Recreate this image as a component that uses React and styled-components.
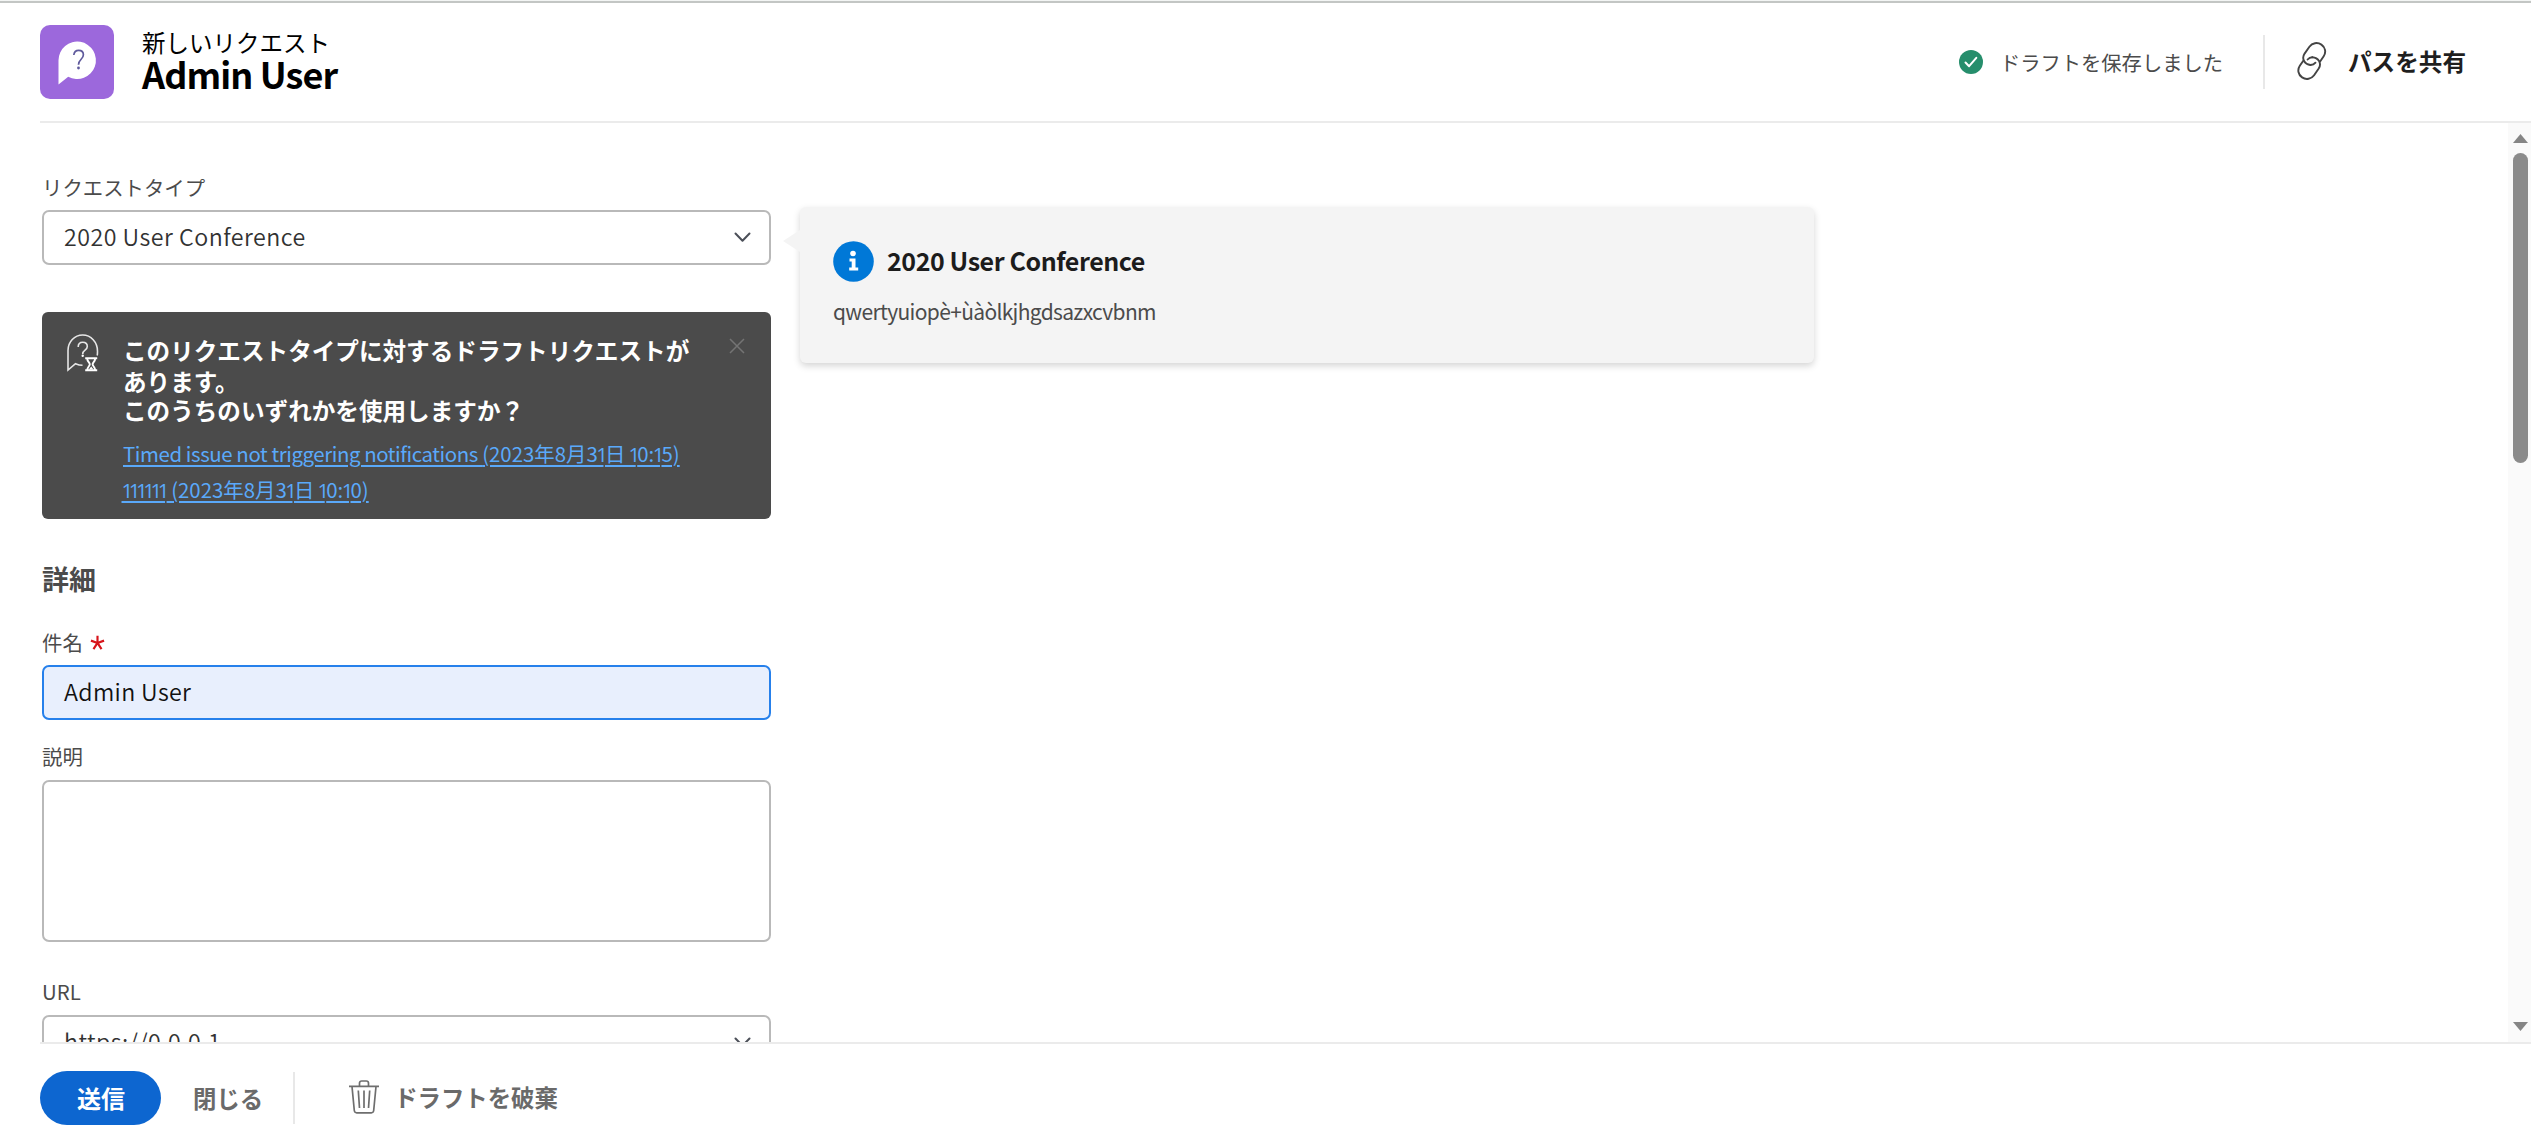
import React from "react";
import styled, { createGlobalStyle } from "styled-components";

const Global = createGlobalStyle`
  *, *::before, *::after { box-sizing: border-box; }
  html, body { margin: 0; padding: 0; background: #fff; overflow: hidden; }
  body { font-family: "Noto Sans CJK JP", "Noto Sans", sans-serif; color: #4b4b4b; }
  button, input, textarea { font: inherit; margin: 0; }
  svg { display: block; flex: none; }
`;

const Page = styled.div`
  width: 2531px;
  height: 1148px;
  display: flex;
  flex-direction: column;
`;

const TopEdge = styled.div`
  height: 3px;
  flex: none;
  border-top: 1px solid #f3f5f4;
  background: #c3c6c4;
`;

const Header = styled.header`
  height: 118px;
  flex: none;
  display: flex;
  align-items: flex-start;
  padding: 22px 65px 0 40px;
`;

const Rule = styled.div`
  height: 2px;
  flex: none;
  margin-left: 40px;
  background: #ebebeb;
`;

const AppIcon = styled.div`
  width: 74px;
  height: 74px;
  border-radius: 10px;
  background: #9c68dc;
  margin-right: 28px;
`;

const Titles = styled.div`
  flex: 1;
  display: flex;
  flex-direction: column;
  color: #000;
`;

const Overline = styled.div`
  font-size: 23.5px;
  line-height: 30px;
  margin-top: 2px;
`;

const Title = styled.h1`
  margin: 0;
  font-size: 36px;
  line-height: 33px;
  font-weight: 700;
  letter-spacing: -0.9px;
`;

const HeaderTools = styled.div`
  display: flex;
  align-items: center;
  height: 54px;
  margin-top: 10px;
`;

const Saved = styled.div`
  display: flex;
  align-items: center;
  gap: 17px;
  font-size: 20.3px;
  line-height: 28px;
  margin-right: 40px;
`;

const Divider = styled.div`
  width: 2px;
  height: ${(p) => p.$height}px;
  background: #e8e8e8;
`;

const ShareButton = styled.button`
  display: flex;
  align-items: center;
  gap: 20px;
  border: 0;
  padding: 0 0 2px;
  margin-left: 32px;
  background: none;
  color: #1f1f1f;
  font-size: 23.6px;
  line-height: 30px;
  font-weight: 700;
`;

const Main = styled.main`
  height: 919px;
  flex: none;
  display: flex;
  overflow: hidden;
`;

const Content = styled.div`
  flex: 1;
  display: flex;
  align-items: flex-start;
  padding: 49px 0 0 42px;
`;

const Form = styled.form`
  width: 729px;
  display: flex;
  flex-direction: column;
`;

const Label = styled.label`
  font-size: 20.4px;
  line-height: 30px;
  height: ${(p) => p.$height || 38}px;
  padding-top: ${(p) => p.$top || 0}px;
`;

const Required = styled.span`
  display: inline-block;
  vertical-align: 1px;
  margin-left: 7px;
`;

const Field = styled.div`
  height: 55px;
  flex: none;
  display: flex;
  align-items: center;
  justify-content: space-between;
  padding: 0 18px 0 20px;
  border: 2px solid ${(p) => (p.$active ? "#2680eb" : "#b9b9b9")};
  border-radius: 7px;
  background: ${(p) => (p.$active ? "#e8effd" : "#fff")};
  color: ${(p) => (p.$active ? "#111" : "#323232")};
`;

const Value = styled.span`
  padding-bottom: 3px;
  font-size: 23.2px;
  font-weight: 350;
  line-height: 30px;
  letter-spacing: ${(p) => p.$track || "0.5px"};
`;

const TextArea = styled.div`
  height: 162px;
  flex: none;
  border: 2px solid #b9b9b9;
  border-radius: 7px;
`;

const Notice = styled.section`
  height: 207px;
  flex: none;
  margin: 47px 0 45px;
  padding: 22px 26px 0 25px;
  display: flex;
  align-items: flex-start;
  border-radius: 6px;
  background: #4b4b4b;
`;

const NoticeBody = styled.div`
  flex: 1;
  margin-left: 24px;
  display: flex;
  flex-direction: column;
  align-items: flex-start;
`;

const NoticeTitle = styled.div`
  color: #fff;
  font-size: 23.6px;
  font-weight: 700;
  line-height: ${(p) => p.$line}px;
  margin: ${(p) => p.$margin};
  white-space: nowrap;
`;

const NoticeLink = styled.a`
  color: #5aa9fa;
  font-size: 20.4px;
  line-height: 36px;
  height: 36px;
  letter-spacing: ${(p) => p.$track};
  white-space: nowrap;
  text-decoration: underline;
  text-decoration-thickness: 2px;
  text-underline-offset: 3px;
`;

const Ones = styled.span`
  font-family: "Open Sans", sans-serif;
  letter-spacing: -4.4px;
  margin-left: -1.5px;
  margin-right: 1.5px;
`;

const DateText = styled.span`
  letter-spacing: 0;
`;

const CloseMark = styled.div`
  margin-top: 4px;
`;

const SectionTitle = styled.h2`
  margin: 0 0 33px;
  font-size: 27px;
  line-height: 30px;
  font-weight: 700;
`;

const Arrow = styled.div`
  width: 17px;
  height: 22px;
  margin: 58px 0 0 12px;
  background: #f4f4f4;
  clip-path: polygon(0 50%, 100% 0, 100% 100%);
`;

const Card = styled.aside`
  width: 1014px;
  height: 156px;
  margin-top: 35px;
  padding: 34px 33px;
  border-radius: 6px;
  background: #f4f4f4;
  box-shadow: 0 3px 7px rgba(0, 0, 0, 0.17);
`;

const CardHead = styled.div`
  display: flex;
  align-items: center;
  gap: 13px;
  height: 41px;
`;

const CardTitle = styled.div`
  color: #1c1c1c;
  font-size: 25px;
  line-height: 36px;
  padding-bottom: 4px;
  font-weight: 700;
  letter-spacing: -0.42px;
`;

const CardText = styled.div`
  margin-top: 14px;
  font-size: 21px;
  line-height: 30px;
  letter-spacing: -0.65px;
`;

const Track = styled.div`
  width: 23px;
  display: flex;
  flex-direction: column;
  align-items: center;
  padding: 11px 0 11px 2px;
  background: #fafafa;
`;

const Thumb = styled.div`
  width: 15px;
  height: 310px;
  margin: 10px 0 auto;
  border-radius: 8px;
  background: #8b8b8b;
`;

const Footer = styled.footer`
  flex: 1;
  display: flex;
  align-items: flex-start;
  padding: 27px 0 0 40px;
`;

const Actions = styled.div`
  height: 54px;
  display: flex;
  align-items: center;
`;

const Primary = styled.button`
  width: 121px;
  height: 54px;
  border: 0;
  border-radius: 27px;
  padding: 0 0 1px 1px;
  background: #0d66d0;
  color: #fff;
  font-size: 24px;
  line-height: 30px;
  font-weight: 700;
`;

const Quiet = styled.button`
  display: flex;
  align-items: center;
  gap: 15px;
  border: 0;
  padding: 0 0 ${(p) => p.$lift || 0}px;
  background: none;
  color: #6a6a6a;
  font-size: 23.4px;
  line-height: 30px;
  font-weight: 700;
  margin: ${(p) => p.$margin};
`;

const Chevron = () => (
  <svg width="17" height="11" viewBox="0 0 17 11" fill="none" stroke="#4b4f58" strokeWidth="2" strokeLinecap="round" strokeLinejoin="round">
    <path d="M1.5 1.5 8.5 8.7 15.5 1.5" />
  </svg>
);

const RequestIcon = () => (
  <svg width="74" height="74" viewBox="0 0 74 74" fill="none">
    <path d="M18.500 59.500V35.300a18.700 18.700 0 1 1 9.700 16.400Z" fill="#fff" />
    <path d="M33.800 30c.4-3.200 2.400-4.700 4.800-4.700 2.800 0 4.800 1.800 4.800 4.500 0 4.600-4.900 4.400-4.900 10" stroke="#5f5a9c" strokeWidth="1.700" />
    <circle cx="38.500" cy="43" r="1.400" fill="#5f5a9c" />
  </svg>
);

const SavedIcon = () => (
  <svg width="24" height="24" viewBox="0 0 24 24" fill="none">
    <circle cx="12" cy="12" r="12" fill="#268e6c" />
    <path d="m6.500 12.500 3.600 3.700 7.200-8.400" stroke="#fff" strokeWidth="2" strokeLinecap="round" strokeLinejoin="round" />
  </svg>
);

const LinkIcon = () => (
  <svg width="31" height="38" viewBox="0 0 31 38" fill="none" stroke="#444" strokeWidth="1.900" strokeLinecap="round">
    <path d="M13.500 23C7.500 22.400 4.200 16.800 7.600 11.600L12.400 4.800c2.800-3.900 8-4.900 12-2.200 4 2.700 4.900 7.800 2.300 11.700l-3.400 5" />
    <path d="M15.300 15.200c6.200.4 9.700 6.200 6.400 11.300l-4.600 6.700c-2.800 3.900-8 4.900-12 2.200-4-2.700-4.900-7.800-2.300-11.700l3.500-5" />
    <path d="M15.300 15.200c-1.900.1-3.500.9-4.700 2.300M13.500 23c2 0 3.800-.8 5-2.300" />
  </svg>
);

const DraftIcon = () => (
  <svg width="32" height="38" viewBox="0 0 32 38" fill="none" stroke="#e6e6e6" strokeWidth="1.600">
    <path d="M30.200 21.500c.3-1.400.3-2.800.3-4.300C30.500 8.200 24 1 15.700 1S1 8 1 16.500V36l7.500-6.300c2.300 1 4.500 1.600 7 1.600" />
    <path d="M11.200 13c0-2.900 1.800-4.700 4.500-4.700s4.600 1.700 4.600 4.300c0 3.900-4.600 3.300-4.600 7.400" />
    <circle cx="15.700" cy="21.800" r="1.200" fill="#fff" stroke="none" />
    <path d="M18.200 24.300h12M18.200 36.300h12M20.200 24.500c0 3 2.600 4 2.600 5.800s-2.600 2.900-2.600 5.800M28.200 24.500c0 3-2.600 4-2.600 5.800s2.600 2.900 2.600 5.800" stroke="#fff" strokeWidth="1.900" />
    <path d="m21.800 35.500 2.400-3 2.400 3Z" fill="#fff" stroke="none" />
  </svg>
);

const InfoIcon = () => (
  <svg width="41" height="41" viewBox="0 0 41 41">
    <circle cx="20.500" cy="20.500" r="20.300" fill="#0078d7" />
    <circle cx="20" cy="12.500" r="2.800" fill="#fff" />
    <path d="M16.500 17.500h6v9h2.700v3h-9v-3h2.500v-6h-2.200Z" fill="#fff" />
  </svg>
);

const TrashIcon = () => (
  <svg width="30" height="34" viewBox="0 0 30 34" fill="none" stroke="#6e6e6e" strokeWidth="1.700">
    <path d="M0 6.300h30M10.500 6V3.200C10.500 1.800 11.300 1 12.700 1h4.600c1.400 0 2.200.8 2.200 2.200V6M3 6.500l2.300 24c.2 1.500 1 2.300 2.400 2.300h14.600c1.400 0 2.200-.8 2.400-2.300l2.300-24M9.300 10.500l1.200 17.500M15 10.500v17.500M20.700 10.500l-1.200 17.500" />
  </svg>
);

const Asterisk = () => (
  <svg width="15" height="15" viewBox="0 0 16 16" stroke="#d7141a" strokeWidth="2.300">
    <path d="M8 8.500V.8M8 8.500 1 6M8 8.500l7-2.500M8 8.500 3.700 15M8 8.500l4.300 6.500" />
  </svg>
);

const ScrollArrow = ({ down }) => (
  <svg width="15" height="9" viewBox="0 0 15 9" fill="#858585">
    <path d={down ? "M0 0h15L7.500 9Z" : "M0 9h15L7.500 0Z"} />
  </svg>
);

const withNarrowOnes = (text) =>
  text.split(/(1+)/).map((part, i) => (part.startsWith("1") ? <Ones key={i}>{part}</Ones> : part));

export default function App() {
  return (
    <>
      <Global />
      <Page>
        <TopEdge />
        <Header>
          <AppIcon><RequestIcon /></AppIcon>
          <Titles>
            <Overline>新しいリクエスト</Overline>
            <Title>Admin User</Title>
          </Titles>
          <HeaderTools>
            <Saved><SavedIcon /><span>ドラフトを保存しました</span></Saved>
            <Divider $height={54} />
            <ShareButton><LinkIcon /><span>パスを共有</span></ShareButton>
          </HeaderTools>
        </Header>
        <Rule />
        <Main>
          <Content>
            <Form>
              <Label>リクエストタイプ</Label>
              <Field><Value>2020 User Conference</Value><Chevron /></Field>
              <Notice>
                <DraftIcon />
                <NoticeBody>
                  <NoticeTitle $line={31} $margin="1px 0 0">
                    このリクエストタイプに対するドラフトリクエストが<br />
                    あります。
                  </NoticeTitle>
                  <NoticeTitle $line={28} $margin="-1px 0 11px">このうちのいずれかを使用しますか？</NoticeTitle>
                  <NoticeLink $track="-0.4px">
                    Timed issue not triggering notifications <DateText>{withNarrowOnes("(2023年8月31日 10:15)")}</DateText>
                  </NoticeLink>
                  <NoticeLink $track="0">{withNarrowOnes("111111 (2023年8月31日 10:10)")}</NoticeLink>
                </NoticeBody>
                <CloseMark>
                  <svg width="16" height="16" viewBox="0 0 16 16" stroke="#747474" strokeWidth="1.500">
                    <path d="m1 1 14 14M15 1 1 15" />
                  </svg>
                </CloseMark>
              </Notice>
              <SectionTitle>詳細</SectionTitle>
              <Label>件名<Required><Asterisk /></Required></Label>
              <Field $active><Value $track="0.35px">Admin User</Value></Field>
              <Label $height={60} $top={21}>説明</Label>
              <TextArea />
              <Label $height={73} $top={34}>URL</Label>
              <Field><Value>https://0.0.0.1</Value><Chevron /></Field>
            </Form>
            <Arrow />
            <Card>
              <CardHead>
                <InfoIcon />
                <CardTitle>2020 User Conference</CardTitle>
              </CardHead>
              <CardText>qwertyuiopè+ùàòlkjhgdsazxcvbnm</CardText>
            </Card>
          </Content>
          <Track>
            <ScrollArrow />
            <Thumb />
            <ScrollArrow down />
          </Track>
        </Main>
        <Rule />
        <Footer>
          <Actions>
            <Primary>送信</Primary>
            <Quiet $margin="0 30px 0 32px">閉じる</Quiet>
            <Divider $height={52} />
            <Quiet $margin="0 0 0 54px" $lift={3}><TrashIcon /><span>ドラフトを破棄</span></Quiet>
          </Actions>
        </Footer>
      </Page>
    </>
  );
}
